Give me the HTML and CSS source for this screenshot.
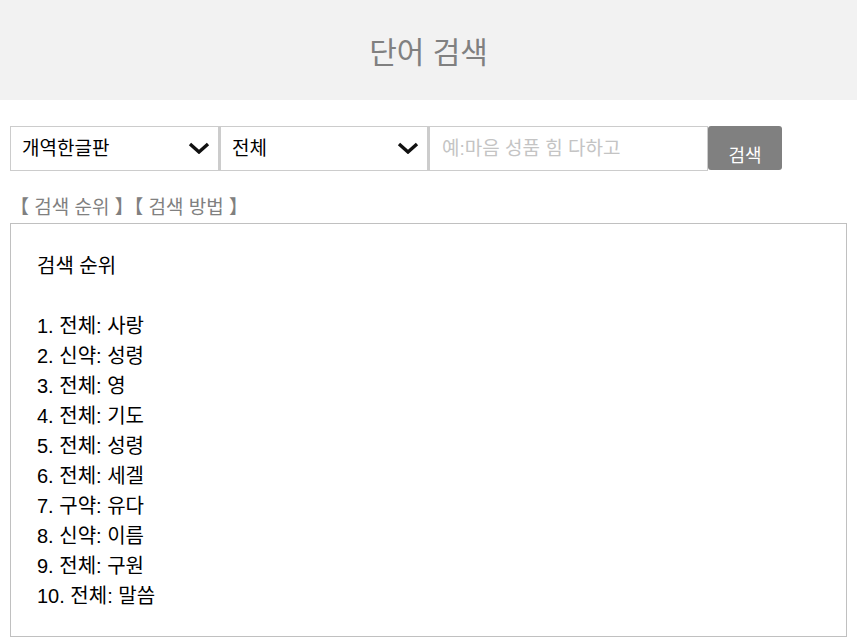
FILE: index.html
```html
<!DOCTYPE html>
<html lang="ko">
<head>
  <meta charset="UTF-8">
  <meta name="viewport" content="width=device-width, initial-scale=1.0">
  <title>단어 검색</title>
  <link rel="stylesheet" href="styles.css">
</head>
<body>
  <header class="top">
    <h1 class="title">단어 검색</h1>
  </header>

  <div class="page">
    <form class="search-bar" onsubmit="return false">
      <div class="select-wrap">
        <select class="pick">
          <option>개역한글판</option>
          <option>개역개정판</option>
        </select>
        <svg class="chev" viewBox="0 0 22 12" width="22" height="12"><path d="M2 2 L11 10 L20 2" fill="none" stroke="#111" stroke-width="3.4"/></svg>
      </div>
      <div class="select-wrap">
        <select class="pick">
          <option>전체</option>
          <option>구약</option>
          <option>신약</option>
        </select>
        <svg class="chev" viewBox="0 0 22 12" width="22" height="12"><path d="M2 2 L11 10 L20 2" fill="none" stroke="#111" stroke-width="3.4"/></svg>
      </div>
      <input class="query" type="text" placeholder="예:마음 성품 힘 다하고">
      <button class="go">검색</button>
    </form>

    <div class="tabs">
      <a href="#">【 검색 순위 】</a><a href="#">【 검색 방법 】</a>
    </div>

    <div class="result">
      <p class="result-title">검색 순위</p>
      <ol class="rank">
        <li>1. 전체: 사랑</li>
        <li>2. 신약: 성령</li>
        <li>3. 전체: 영</li>
        <li>4. 전체: 기도</li>
        <li>5. 전체: 성령</li>
        <li>6. 전체: 세겔</li>
        <li>7. 구약: 유다</li>
        <li>8. 신약: 이름</li>
        <li>9. 전체: 구원</li>
        <li>10. 전체: 말씀</li>
      </ol>
    </div>
  </div>
</body>
</html>
```

FILE: styles.css
```css
body {
  margin: 0;
  font-family: "Liberation Sans", "Noto Sans CJK KR", sans-serif;
  color: #000;
  background: #fff;
}

.top {
  background: #f2f2f2;
  height: 100px;
  display: flex;
  align-items: center;
  justify-content: center;
}

.title {
  margin: 0;
  font-weight: normal;
  font-size: 30px;
  color: #808080;
}

.page {
  padding: 26px 10px 0;
}

.search-bar {
  display: flex;
  align-items: flex-start;
  margin: 0;
}

.select-wrap {
  position: relative;
  width: 209px;
}

.pick {
  appearance: none;
  -webkit-appearance: none;
  width: 100%;
  height: 45px;
  box-sizing: border-box;
  border: 1px solid #cccccc;
  border-radius: 0;
  background: #fff;
  padding: 0 11px;
  font-family: inherit;
  font-size: 19px;
  color: #000;
}

.select-wrap + .select-wrap .pick {
  border-left: 2px solid #cccccc;
}

.chev {
  position: absolute;
  right: 9px;
  top: 16px;
  pointer-events: none;
}

.query {
  width: 280px;
  height: 45px;
  box-sizing: border-box;
  border: 1px solid #cccccc;
  border-left: 2px solid #cccccc;
  padding: 0 12px;
  font-family: inherit;
  font-size: 19px;
  outline: none;
}

.query::placeholder {
  color: #c4c4c4;
}

.go {
  width: 74px;
  height: 44px;
  border: none;
  border-radius: 3px;
  background: #808080;
  color: #fff;
  font-family: inherit;
  font-size: 18px;
  padding: 12px 0 0;
  cursor: pointer;
}

.tabs {
  margin-top: 25px;
  font-size: 19px;
  line-height: 24px;
}

.tabs a {
  color: #808080;
  text-decoration: none;
}

.result {
  border: 1px solid #c0c0c0;
  padding: 27px 26px 25px;
  margin-top: 3px;
  font-size: 20px;
  line-height: 30px;
}

.result-title {
  margin: 0 0 30px;
}

.rank {
  list-style: none;
  margin: 0;
  padding: 0;
}
```
